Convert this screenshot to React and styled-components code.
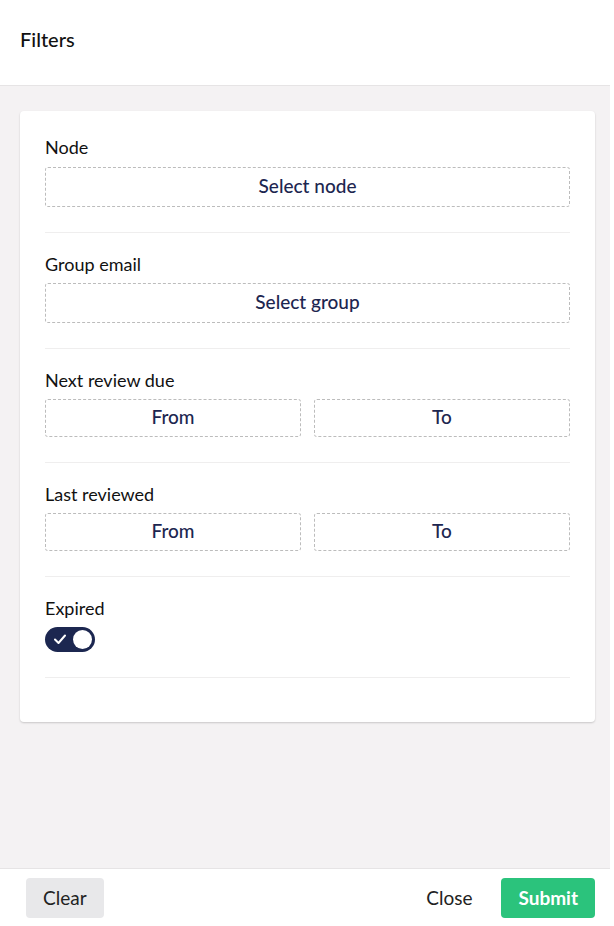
import React, { useState } from 'react';
import styled, { createGlobalStyle } from 'styled-components';

const GlobalStyle = createGlobalStyle`
  html, body {
    margin: 0;
    padding: 0;
    background: #fff;
    font-family: Lato, "Open Sans", sans-serif;
  }
  * { box-sizing: border-box; }
`;

const Page = styled.div`
  width: 610px;
  height: 926px;
  display: flex;
  flex-direction: column;
  background: #f4f2f3;
`;

const Header = styled.header`
  height: 86px;
  flex-shrink: 0;
  display: flex;
  align-items: center;
  padding: 0 20px 8px;
  background: #fff;
  border-bottom: 1px solid #e6e4e5;
  font-size: 20px;
  font-weight: 500;
  color: #111;
`;

const Body = styled.main`
  flex: 1;
  padding: 25px 15px 0 20px;
`;

const Card = styled.div`
  background: #fff;
  border-radius: 4px;
  box-shadow: 0 1px 2px rgba(0, 0, 0, 0.18);
  padding: 5px 25px 44px;
`;

const Section = styled.section`
  padding: 21px 0 25px;
  border-bottom: 1px solid #efeeee;
`;

const Label = styled.div`
  font-size: 18px;
  line-height: 20px;
  color: #111;
  margin-bottom: ${(p) => p.$gap || 10}px;
`;

const Row = styled.div`
  display: grid;
  grid-template-columns: 1fr 1fr;
  gap: 13px;
`;

const Picker = styled.button`
  display: flex;
  align-items: center;
  justify-content: center;
  width: 100%;
  height: ${(p) => p.$h || 40}px;
  padding: 0 0 3px;
  background: #fff;
  border: 1px dashed #bcbcbc;
  border-radius: 3px;
  font-family: inherit;
  font-size: 19px;
  font-weight: 500;
  color: #1d2650;
  cursor: pointer;
`;

const Toggle = styled.button`
  position: relative;
  display: block;
  width: 50px;
  height: 25px;
  padding: 0;
  border: none;
  border-radius: 13px;
  background: ${(p) => (p.$on ? '#1c2750' : '#c9c9c9')};
  cursor: pointer;
`;

const Knob = styled.span`
  position: absolute;
  top: 3px;
  left: ${(p) => (p.$on ? 28 : 3)}px;
  width: 19px;
  height: 19px;
  border-radius: 50%;
  background: #fff;
`;

const Check = styled.svg`
  position: absolute;
  left: 9px;
  top: 7px;
`;

const Footer = styled.footer`
  height: 58px;
  flex-shrink: 0;
  display: flex;
  align-items: center;
  padding: 0 15px 0 26px;
  background: #fff;
  border-top: 1px solid #e6e4e5;
`;

const Spacer = styled.div`
  flex: 1;
`;

const Button = styled.button`
  height: 40px;
  padding: 0 17px;
  border: none;
  border-radius: 4px;
  font-family: inherit;
  font-size: 19px;
  font-weight: ${(p) => (p.$primary ? 700 : 400)};
  color: ${(p) => (p.$primary ? '#fff' : '#222')};
  background: ${(p) => p.$bg || 'transparent'};
  margin-left: ${(p) => p.$ml || 0}px;
  cursor: pointer;
`;

export default function App() {
  const [expired, setExpired] = useState(true);
  return (
    <>
      <GlobalStyle />
      <Page>
        <Header>Filters</Header>
        <Body>
          <Card>
            <Section>
              <Label>Node</Label>
              <Picker>Select node</Picker>
            </Section>
            <Section>
              <Label $gap={9}>Group email</Label>
              <Picker>Select group</Picker>
            </Section>
            <Section>
              <Label $gap={9}>Next review due</Label>
              <Row>
                <Picker $h={38}>From</Picker>
                <Picker $h={38}>To</Picker>
              </Row>
            </Section>
            <Section>
              <Label $gap={9}>Last reviewed</Label>
              <Row>
                <Picker $h={38}>From</Picker>
                <Picker $h={38}>To</Picker>
              </Row>
            </Section>
            <Section>
              <Label $gap={9}>Expired</Label>
              <Toggle $on={expired} onClick={() => setExpired(!expired)}>
                {expired && (
                  <Check width="12" height="11" viewBox="0 0 12 11">
                    <path d="M1 5.5 L4.5 9 L11 1.5" fill="none" stroke="#fff" strokeWidth="2" strokeLinecap="round" strokeLinejoin="round" />
                  </Check>
                )}
                <Knob $on={expired} />
              </Toggle>
            </Section>
          </Card>
        </Body>
        <Footer>
          <Button $bg="#e8e8ea">Clear</Button>
          <Spacer />
          <Button>Close</Button>
          <Button $primary $bg="#2bc37c" $ml={12}>Submit</Button>
        </Footer>
      </Page>
    </>
  );
}
